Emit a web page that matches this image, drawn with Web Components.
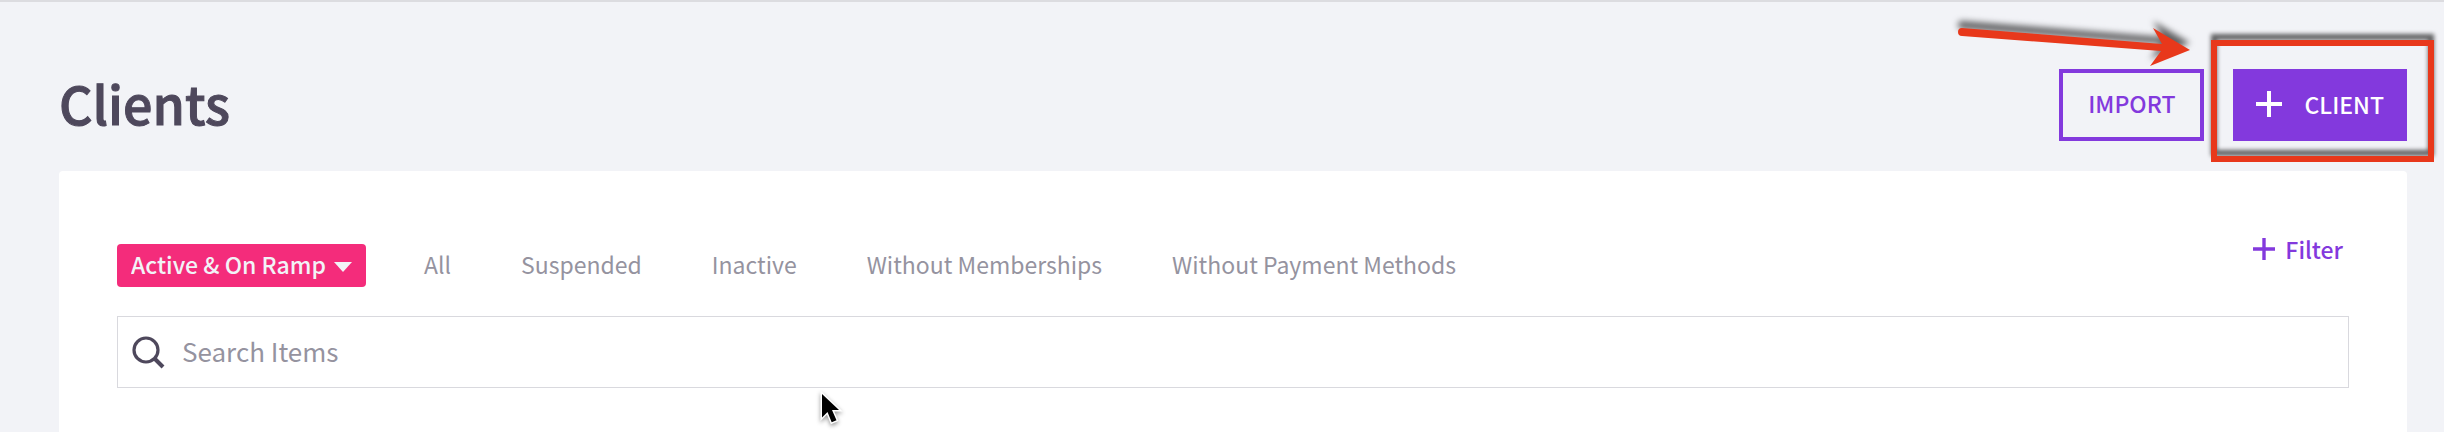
<!DOCTYPE html>
<html lang="en">
<head>
<meta charset="utf-8">
<meta name="viewport" content="width=device-width, initial-scale=1">
<title>Clients</title>
<style>
  :root {
    --page: #f2f3f7;
    --ink: #4e485c;
    --muted: #95939f;
    --line: #d9d9de;
    --purple: #8339dd;
    --pink: #f42c7b;
    --alert: #e8381b;
  }
  body {
    margin: 0;
    background: var(--page);
    color: var(--ink);
    font: 400 23px/34px "Noto Sans CJK SC", "Noto Sans", sans-serif;
  }
</style>
</head>
<body>
<clients-page></clients-page>

<script>
function define(name, markup) {
  const template = document.createElement('template');
  template.innerHTML = markup;
  customElements.define(name, class extends HTMLElement {
    constructor() {
      super();
      this.attachShadow({ mode: 'open' }).append(template.content.cloneNode(true));
    }
  });
}

define('plus-icon', `
  <style>
    :host { display: block; flex: none; width: 26px; height: 26px; }
    svg { display: block; width: 100%; height: 100%; }
  </style>
  <svg viewBox="0 0 26 26" aria-hidden="true"><path d="M11 0h4v11h11v4H15v11h-4V15H0v-4h11z" fill="currentColor"/></svg>
`);

define('outline-button', `
  <style>
    :host { display: block; }
    button {
      display: block; box-sizing: border-box; height: 72px; padding: 0 25px 4px;
      border: 4px solid var(--purple); border-radius: 0; background: none;
      color: var(--purple); font: inherit; font-weight: 500; cursor: pointer;
    }
  </style>
  <button type="button"><slot></slot></button>
`);

define('primary-button', `
  <style>
    :host { display: block; }
    button {
      display: flex; align-items: center; gap: 22px; box-sizing: border-box;
      height: 72px; padding: 0 23px 2px; border: 0; border-radius: 0;
      background: var(--purple); color: #fff; font: inherit; font-weight: 500; cursor: pointer;
    }
  </style>
  <button type="button"><plus-icon></plus-icon><slot></slot></button>
`);

define('text-button', `
  <style>
    :host { display: block; }
    button {
      display: flex; align-items: center; gap: 10px; height: 42px; padding: 0 6px 2px;
      border: 0; background: none; color: var(--purple);
      font: inherit; font-weight: 500; cursor: pointer;
    }
    plus-icon { width: 22px; height: 22px; }
  </style>
  <button type="button"><plus-icon></plus-icon><slot></slot></button>
`);

define('highlight-box', `
  <style>
    :host { display: block; position: relative; }
    .frame { position: absolute; inset: -29px -27px -21px -22px; pointer-events: none; }
    .frame::after {
      content: ""; position: absolute; inset: 0; border: 6px solid var(--alert);
      filter: drop-shadow(0 -6px 2px rgba(0, 0, 0, .6));
    }
  </style>
  <slot></slot>
  <div class="frame"></div>
`);

define('pointer-arrow', `
  <style>
    :host { display: block; pointer-events: none; }
    svg { display: block; overflow: visible; filter: drop-shadow(0 -7px 3px rgba(0, 0, 0, .6)); }
  </style>
  <svg width="232" height="39" viewBox="0 0 232 39" aria-hidden="true">
    <path d="M4 1 204 17 195 1 232 23 192 39 203 24 4 9A4 4 0 0 1 4 1z" fill="#e8381b"/>
  </svg>
`);

define('mouse-cursor', `
  <style>
    :host { display: block; pointer-events: none; }
    svg { display: block; overflow: visible; filter: drop-shadow(0 2px 2px rgba(0, 0, 0, .4)); }
  </style>
  <svg width="22" height="34" viewBox="0 0 22 34" aria-hidden="true">
    <path d="M2 3V26.500L7.500 21 11.700 31.300 16.500 29.300 12 19H19z" fill="#000" stroke="#fff" stroke-width="3" paint-order="stroke"/>
  </svg>
`);

define('page-header', `
  <style>
    :host {
      display: flex; align-items: center; justify-content: space-between;
      padding: 67px 37px 30px 59px; border-top: 2px solid #dcdce0;
    }
    h1 {
      margin: 0; padding-bottom: 4px; font-size: 52px; line-height: 68px; font-weight: 500;
      -webkit-text-stroke: 1px currentColor;
    }
    .actions { position: relative; display: flex; gap: 29px; }
    pointer-arrow { position: absolute; right: 217px; bottom: 75px; }
  </style>
  <h1><slot name="title"></slot></h1>
  <div class="actions">
    <slot name="actions"></slot>
    <pointer-arrow></pointer-arrow>
  </div>
`);

define('status-select', `
  <style>
    :host { display: grid; align-items: center; height: 43px; border-radius: 4px; background: var(--pink); }
    select, svg { grid-area: 1 / 1; }
    select {
      appearance: none; height: 43px; margin: 0; padding: 0 40px 4px 14px; border: 0; background: none;
      color: var(--page); font: inherit; font-weight: 500; cursor: pointer;
    }
    svg { justify-self: end; margin-right: 14px; margin-top: 2px; pointer-events: none; }
  </style>
  <select aria-label="Status"><option>Active &amp; On Ramp</option></select>
  <svg width="18" height="10" viewBox="0 0 18 10" aria-hidden="true"><path d="M0 0h18L9 10z" fill="#f2f3f7"/></svg>
`);

define('status-nav', `
  <style>
    :host { display: block; }
    nav { display: flex; align-items: center; gap: 58px; }
    .links { display: flex; gap: 70px; padding-bottom: 4px; }
    a { color: var(--muted); text-decoration: none; white-space: nowrap; }
  </style>
  <nav aria-label="Client status">
    <status-select></status-select>
    <div class="links">
      <a href="#all">All</a>
      <a href="#suspended">Suspended</a>
      <a href="#inactive">Inactive</a>
      <a href="#without-memberships">Without Memberships</a>
      <a href="#without-payment-methods">Without Payment Methods</a>
    </div>
  </nav>
`);

define('search-field', `
  <style>
    :host { display: block; }
    label {
      display: flex; align-items: center; gap: 17px; box-sizing: border-box; height: 72px;
      padding: 0 14px; border: 1px solid var(--line); background: #fff;
    }
    svg { flex: none; }
    input {
      flex: 1; min-width: 0; box-sizing: border-box; height: 70px; padding: 0 0 4px; border: 0;
      outline: 0; background: none; color: var(--ink); font: inherit; font-size: 26px;
    }
    input::placeholder { color: var(--muted); opacity: 1; }
  </style>
  <label>
    <svg width="33" height="33" viewBox="0 0 33 33" fill="none" stroke="#4e485c" aria-hidden="true">
      <circle cx="14" cy="14" r="12" stroke-width="3.200"/>
      <path d="m22 22 9 9" stroke-width="4"/>
    </svg>
    <input type="search" placeholder="Search Items" aria-label="Search Items">
  </label>
`);

define('content-card', `
  <style>
    :host {
      display: block; flex: 1; box-sizing: border-box; margin: 0 37px 0 59px;
      padding: 58px 58px 44px; border-radius: 4px 4px 0 0; background: #fff;
    }
    .toolbar { display: flex; align-items: flex-start; justify-content: space-between; margin-bottom: 29px; }
    status-nav { margin-top: 15px; }
  </style>
  <div class="toolbar">
    <status-nav></status-nav>
    <text-button>Filter</text-button>
  </div>
  <slot></slot>
`);

define('clients-page', `
  <style>
    :host { display: flex; flex-direction: column; position: relative; min-height: 100vh; }
    mouse-cursor { position: absolute; left: 820px; top: 391px; }
  </style>
  <page-header>
    <span slot="title">Clients</span>
    <outline-button slot="actions">IMPORT</outline-button>
    <highlight-box slot="actions"><primary-button>CLIENT</primary-button></highlight-box>
  </page-header>
  <content-card><search-field></search-field></content-card>
  <mouse-cursor></mouse-cursor>
`);
</script>
</body>
</html>
